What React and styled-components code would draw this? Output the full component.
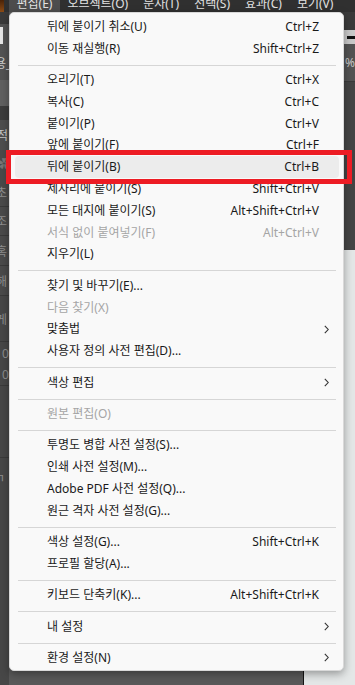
import React from "react";
import styled, { createGlobalStyle } from "styled-components";

const GlobalStyle = createGlobalStyle`
  html, body {
    margin: 0;
    padding: 0;
    background: #595959;
  }
`;

const Screen = styled.div`
  position: relative;
  width: 355px;
  height: 685px;
  overflow: hidden;
  display: flex;
  flex-direction: column;
  background: #595959;
  font-family: "Noto Sans", "Noto Sans CJK KR", sans-serif;
`;

const MenuBar = styled.div`
  flex: none;
  height: 12px;
  display: flex;
  background: #303030;
  overflow: hidden;
`;

const AppIcon = styled.div`
  flex: none;
  width: 4px;
  height: 12px;
  margin-right: 5px;
  background: linear-gradient(#4a2308, #8c4b15);
`;

const MenuTitle = styled.div`
  flex: none;
  height: 16px;
  margin-top: -4px;
  padding: 0 7.5px;
  line-height: 16px;
  font-size: 12px;
  color: #e2e2e2;
  white-space: nowrap;
  background: ${(p) => (p.$active ? "#4d4d4d" : "transparent")};
`;

const Workspace = styled.div`
  flex: 1;
  min-height: 0;
  display: flex;
`;

const LeftDock = styled.div`
  flex: none;
  width: 9px;
  display: flex;
  flex-direction: column;
  background: #474747;
  overflow: hidden;
`;

const Canvas = styled.div`
  flex: 1;
  background: #595959;
`;

const RightDock = styled.div`
  flex: none;
  width: 51px;
  display: flex;
  flex-direction: column;
  border-left: 1px solid #141414;
  background: #e4e7e7;
  overflow: hidden;
`;

const DockBlock = styled.div`
  flex: none;
  box-sizing: border-box;
  height: ${(p) => p.$h}px;
  display: flex;
  align-items: center;
  background: ${(p) => p.$bg};
  border-bottom: ${(p) => (p.$line ? "1px solid #3a3a3a" : "none")};
  font-size: 12px;
  color: ${(p) => p.$fg || "#8e8e8e"};
  white-space: nowrap;
`;

const DockLabel = styled.span`
  margin-left: ${(p) => p.$shift}px;
`;

const InputStub = styled.div`
  width: 3px;
  height: 17px;
  background: #e6e6e6;
`;

const Dash = styled.div`
  width: 8px;
  height: 3px;
  margin-left: 43px;
  background: #111;
`;

const Dropdown = styled.div`
  position: absolute;
  top: 12px;
  left: 9px;
  width: 335px;
  box-sizing: border-box;
  padding: 2.8px 0 1px;
  background: #f9f9f9;
  border: 1px solid #d9d9d9;
  border-radius: 5px;
  box-shadow: 0 3px 8px rgba(0, 0, 0, 0.35);
`;

const Item = styled.div`
  display: grid;
  grid-template-columns: 1fr auto 10px;
  align-items: center;
  height: 21.8px;
  margin: 0 4px 0 5px;
  padding: 0 10px 0 32px;
  border-radius: 4px;
  font-size: 12px;
  line-height: 21.8px;
  white-space: nowrap;
  color: ${(p) => (p.$disabled ? "#a5a5a5" : "#1a1a1a")};
  background: ${(p) => (p.$hover ? "#ececec" : "transparent")};
`;

const Shortcut = styled.span`
  text-align: right;
`;

const Chevron = styled.svg`
  justify-self: end;
  display: block;
`;

const Separator = styled.div`
  height: 1px;
  margin: 5.3px 7px 3.3px 8px;
  background: #d6d6d6;
`;

const Callout = styled.div`
  position: absolute;
  left: 6px;
  top: 149.5px;
  width: 345.5px;
  height: 34.5px;
  box-sizing: border-box;
  border: 5px solid #ed1c24;
  pointer-events: none;
`;

const titles = ["편집(E)", "오브젝트(O)", "문자(T)", "선택(S)", "효과(C)", "보기(V)"];

const SEP = { sep: true };
const entries = [
  { label: "뒤에 붙이기 취소(U)", key: "Ctrl+Z" },
  { label: "이동 재실행(R)", key: "Shift+Ctrl+Z" },
  SEP,
  { label: "오리기(T)", key: "Ctrl+X" },
  { label: "복사(C)", key: "Ctrl+C" },
  { label: "붙이기(P)", key: "Ctrl+V" },
  { label: "앞에 붙이기(F)", key: "Ctrl+F" },
  { label: "뒤에 붙이기(B)", key: "Ctrl+B", hover: true },
  { label: "제자리에 붙이기(S)", key: "Shift+Ctrl+V" },
  { label: "모든 대지에 붙이기(S)", key: "Alt+Shift+Ctrl+V" },
  { label: "서식 없이 붙여넣기(F)", key: "Alt+Ctrl+V", disabled: true },
  { label: "지우기(L)" },
  SEP,
  { label: "찾기 및 바꾸기(E)..." },
  { label: "다음 찾기(X)", disabled: true },
  { label: "맞춤법", sub: true },
  { label: "사용자 정의 사전 편집(D)..." },
  SEP,
  { label: "색상 편집", sub: true },
  SEP,
  { label: "원본 편집(O)", disabled: true },
  SEP,
  { label: "투명도 병합 사전 설정(S)..." },
  { label: "인쇄 사전 설정(M)..." },
  { label: "Adobe PDF 사전 설정(Q)..." },
  { label: "원근 격자 사전 설정(G)..." },
  SEP,
  { label: "색상 설정(G)...", key: "Shift+Ctrl+K" },
  { label: "프로필 할당(A)..." },
  SEP,
  { label: "키보드 단축키(K)...", key: "Alt+Shift+Ctrl+K" },
  SEP,
  { label: "내 설정", sub: true },
  SEP,
  { label: "환경 설정(N)", sub: true },
];

function ChevronIcon() {
  return (
    <Chevron width="5" height="9" viewBox="0 0 5 9">
      <path d="M0.8 0.8 L4.2 4.5 L0.8 8.2" fill="none" stroke="#333" strokeWidth="1.1" />
    </Chevron>
  );
}

function App() {
  return (
    <Screen>
      <GlobalStyle />
      <MenuBar>
        <AppIcon />
        {titles.map((t, i) => (
          <MenuTitle key={t} $active={i === 0}>{t}</MenuTitle>
        ))}
      </MenuBar>
      <Workspace>
        <LeftDock>
          <DockBlock $h={12} $bg="#3a3a3a" />
          <DockBlock $h={22} $bg="#535353"><InputStub /></DockBlock>
          <DockBlock $h={34} $bg="#535353" $fg="#d0d0d0"><DockLabel $shift={-5}>용_</DockLabel></DockBlock>
          <DockBlock $h={26} $bg="#606060" />
          <DockBlock $h={14} $bg="#3c3c3c" />
          <DockBlock $h={30} $bg="#4e4e4e" $fg="#c8c8c8"><DockLabel $shift={-3}>적</DockLabel></DockBlock>
          <DockBlock $h={28} $bg="#4a4a4a" $fg="#777"><DockLabel $shift={-2}>✿</DockLabel></DockBlock>
          <DockBlock $h={29} $bg="#4a4a4a" $line><DockLabel $shift={-4}>초</DockLabel></DockBlock>
          <DockBlock $h={29} $bg="#4a4a4a" $line><DockLabel $shift={-4}>조</DockLabel></DockBlock>
          <DockBlock $h={30} $bg="#4a4a4a" $line><DockLabel $shift={-4}>혹</DockLabel></DockBlock>
          <DockBlock $h={30} $bg="#4a4a4a" $line><DockLabel $shift={-4}>해</DockLabel></DockBlock>
          <DockBlock $h={46} $bg="#474747" $line><DockLabel $shift={-4}>게</DockLabel></DockBlock>
          <DockBlock $h={22} $bg="#474747"><DockLabel $shift={2}>0</DockLabel></DockBlock>
          <DockBlock $h={22} $bg="#474747" $line><DockLabel $shift={2}>0</DockLabel></DockBlock>
          <DockBlock $h={72} $bg="#474747" $line />
          <DockBlock $h={40} $bg="#474747"><DockLabel $shift={-6}>ㄱ</DockLabel></DockBlock>
        </LeftDock>
        <Canvas />
        <RightDock>
          <DockBlock $h={18} $bg="#3a3a3a" />
          <DockBlock $h={14} $bg="#c9c9c9"><Dash /></DockBlock>
          <DockBlock $h={38} $bg="#535353" $fg="#c8c8c8" $line><DockLabel $shift={41}>%(</DockLabel></DockBlock>
          <DockBlock $h={168} $bg="#444" />
        </RightDock>
      </Workspace>

      <Dropdown>
        {entries.map((e, i) =>
          e.sep ? (
            <Separator key={i} />
          ) : (
            <Item key={i} $disabled={e.disabled} $hover={e.hover}>
              <span>{e.label}</span>
              <Shortcut>{e.key}</Shortcut>
              {e.sub ? <ChevronIcon /> : <span />}
            </Item>
          )
        )}
      </Dropdown>
      <Callout />
    </Screen>
  );
}

export default App;
